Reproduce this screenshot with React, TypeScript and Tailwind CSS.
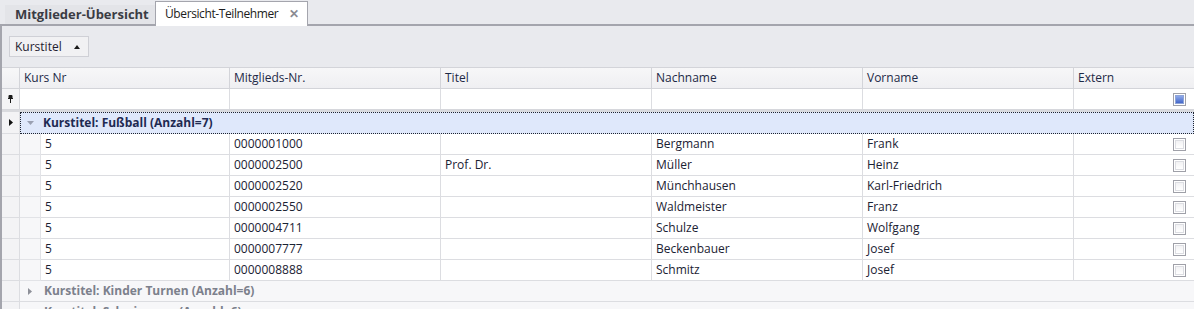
import React from "react";

const rows: string[][] = [
  ["5", "0000001000", "", "Bergmann", "Frank"],
  ["5", "0000002500", "Prof. Dr.", "Müller", "Heinz"],
  ["5", "0000002520", "", "Münchhausen", "Karl-Friedrich"],
  ["5", "0000002550", "", "Waldmeister", "Franz"],
  ["5", "0000004711", "", "Schulze", "Wolfgang"],
  ["5", "0000007777", "", "Beckenbauer", "Josef"],
  ["5", "0000008888", "", "Schmitz", "Josef"],
];

function Check({ filled = false }: { filled?: boolean }) {
  return (
    <div className="w-[13px] h-[13px] border border-[#9fa0a8] bg-white p-px box-border">
      {filled ? (
        <div className="w-full h-full border border-[#8ea4d8] bg-gradient-to-b from-[#8fa9ea] to-[#4467c9]" />
      ) : (
        <div className="w-full h-full border border-[#dcdde2] bg-gradient-to-b from-[#f2f2f4] to-white" />
      )}
    </div>
  );
}

const colTemplate = "grid grid-cols-[18px_210px_211px_211px_211px_211px_1fr]";

export default function App() {
  return (
    <div
      className="w-[1194px] h-[309px] overflow-hidden bg-[#e9eaee] text-[12px] leading-none"
      style={{ fontFamily: "'Open Sans', 'Noto Sans', sans-serif" }}
    >
      {/* Tab bar */}
      <div className="h-[26px] flex items-end">
        <div className="w-[5px] h-[2px] bg-[#a4a5ad]" />
        <div className="h-[21px] w-[150px] flex items-center pl-[10px] border-b-2 border-[#a4a5ad] bg-[#e3e4e8] font-bold text-[13px] text-[#3a3c44]">
          Mitglieder-Übersicht
        </div>
        <div className="h-[25px] w-[153px] flex items-center pl-[9px] pr-[8px] bg-white border border-b-0 border-[#a4a5ad] text-[#1c1c20]">
          <span className="tracking-[-0.4px]">Übersicht-Teilnehmer</span>
          <span className="ml-auto text-[#8a8b92] font-bold text-[12px]">✕</span>
        </div>
        <div className="flex-1 h-[2px] bg-[#a4a5ad]" />
      </div>

      <div className="border-l-2 border-[#a4a5ad] h-full">
        {/* Group panel */}
        <div className="h-[41px] flex items-center pl-[7px]">
          <div className="h-[21px] w-[80px] flex items-center pl-[5px] pr-[8px] border border-[#cfd0d6] bg-[#f1f1f3] text-[#1f2130]">
            <span>Kurstitel</span>
            <svg className="ml-auto" width="6" height="4" viewBox="0 0 6 4">
              <path d="M0 4 L3 0 L6 4 Z" fill="#1a1a1a" />
            </svg>
          </div>
        </div>

        {/* Header */}
        <div className={`${colTemplate} h-[22px] border-t border-b border-[#d3d4d9] bg-gradient-to-b from-[#f7f7f8] to-[#efeff2] text-[#1d2946]`}>
          <div className="border-r border-[#d3d4d9]" />
          {["Kurs Nr", "Mitglieds-Nr.", "Titel", "Nachname", "Vorname", "Extern"].map((h, i) => (
            <div key={h} className={`flex items-center pl-[4px] ${i < 5 ? "border-r border-[#d3d4d9]" : ""}`}>
              {h}
            </div>
          ))}
        </div>

        {/* Filter row */}
        <div className={`${colTemplate} h-[21px] border-b border-[#d6d7dc] bg-white`}>
          <div className="border-r border-[#d6d7dc] bg-[#f4f4f6] flex items-center pl-[6px]">
            <svg width="5" height="8" viewBox="0 0 5 8">
              <rect x="0.5" y="0" width="4" height="4" rx="1" fill="#1a1a1a" />
              <rect x="0" y="3" width="5" height="1" fill="#1a1a1a" />
              <rect x="2" y="4" width="1" height="4" fill="#1a1a1a" />
            </svg>
          </div>
          <div className="border-r border-[#dcdde1]" />
          <div className="border-r border-[#dcdde1]" />
          <div className="border-r border-[#dcdde1]" />
          <div className="border-r border-[#dcdde1]" />
          <div className="border-r border-[#dcdde1]" />
          <div className="flex items-center justify-end pr-[8px]">
            <Check filled />
          </div>
        </div>
        <div className="h-[2px] bg-[#d9dade]" />

        {/* Group 1 */}
        <div className="flex h-[22px]">
          <div className="w-[18px] border-r border-b border-[#dcdde1] bg-[#f3f3f5] flex items-center pl-[7px]">
            <svg width="4" height="7" viewBox="0 0 4 7">
              <path d="M0 0 L4 3.5 L0 7 Z" fill="#111" />
            </svg>
          </div>
          <div className="flex-1 bg-[#dfe8fb] border border-dotted border-[#1f2430] flex items-center pl-[6px] font-bold text-[#1e2a52]">
            <svg width="7" height="4" viewBox="0 0 7 4" className="mr-[9px]">
              <path d="M0 0 L7 0 L3.5 4 Z" fill="#9aa0b2" />
            </svg>
            Kurstitel: Fußball (Anzahl=7)
          </div>
        </div>

        {/* Data rows */}
        {rows.map((r, ri) => (
          <div key={ri} className={`${colTemplate} h-[21px] bg-white text-[#1b2233]`}>
            <div className="border-r border-b border-[#dcdde1] bg-[#f3f3f5]" />
            <div className="flex border-r border-[#dcdde1]">
              <div className="w-[21px] border-r border-b border-[#e2e3e7] bg-[#f7f7f9]" />
              <div className="flex-1 flex items-center pl-[4px] border-b border-[#dcdde1]">{r[0]}</div>
            </div>
            {r.slice(1).map((c, ci) => (
              <div key={ci} className="flex items-center pl-[4px] border-r border-b border-[#dcdde1]">
                {c}
              </div>
            ))}
            <div className="flex items-center justify-end pr-[8px] border-b border-[#dcdde1]">
              <Check />
            </div>
          </div>
        ))}

        {/* Collapsed groups */}
        {["Kurstitel: Kinder Turnen (Anzahl=6)", "Kurstitel: Schwimmen (Anzahl=6)"].map((g) => (
          <div key={g} className="flex h-[21px] border-b border-[#dcdde1] bg-[#f7f7f9]">
            <div className="w-[18px] border-r border-[#dcdde1] bg-[#f3f3f5]" />
            <div className="flex-1 flex items-center pl-[8px] font-bold text-[#7c808c]">
              <svg width="4" height="7" viewBox="0 0 4 7" className="mr-[12px]">
                <path d="M0 0 L4 3.5 L0 7 Z" fill="#8e9099" />
              </svg>
              {g}
            </div>
          </div>
        ))}
      </div>
    </div>
  );
}
